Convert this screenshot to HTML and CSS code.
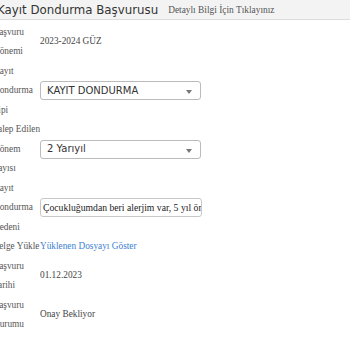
FILE: index.html
```html
<!DOCTYPE html>
<html lang="tr">
<head>
<meta charset="utf-8">
<link rel="stylesheet" href="styles.css">
</head>
<body>
<div class="page">
  <div class="header">
    <span class="title">Kayıt Dondurma Başvurusu</span>
    <a class="info">Detaylı Bilgi İçin Tıklayınız</a>
  </div>
  <div class="form">
    <div class="label">Başvuru Dönemi</div>
    <div class="value">2023-2024 GÜZ</div>

    <div class="label">Kayıt Dondurma Tipi</div>
    <div class="value"><div class="select"><span>KAYIT DONDURMA</span><i class="caret"></i></div></div>

    <div class="label">Talep Edilen Dönem Sayısı</div>
    <div class="value"><div class="select"><span>2 Yarıyıl</span><i class="caret"></i></div></div>

    <div class="label">Kayıt Dondurma Nedeni</div>
    <div class="value"><div class="input">Çocukluğumdan beri alerjim var, 5 yıl önce</div></div>

    <div class="label">Belge Yükle</div>
    <div class="value"><a class="link">Yüklenen Dosyayı Göster</a></div>

    <div class="label">Başvuru Tarihi</div>
    <div class="value">01.12.2023</div>

    <div class="label">Başvuru Durumu</div>
    <div class="value">Onay Bekliyor</div>
  </div>
</div>
</body>
</html>
```
FILE: styles.css
```css
html, body {
  margin: 0;
  padding: 0;
  background: #fff;
}
.page {
  width: 360px;
  margin-left: -8px;
  font-family: "Liberation Serif", "Times New Roman", serif;
  font-size: 9.3px;
  color: #444;
}
.header {
  height: 19px;
  background: #f3f3f3;
  border-bottom: 1px solid #dcdcdc;
  display: flex;
  align-items: center;
  padding-left: 5px;
  margin-bottom: 2.5px;
}
.title {
  font-family: "DejaVu Sans", Verdana, sans-serif;
  font-size: 11.8px;
  color: #333;
  margin-right: 10px;
}
.info {
  color: #555;
  font-size: 9.4px;
}
.form {
  display: grid;
  grid-template-columns: 48px 1fr;
  line-height: 19.5px;
}
.label {
  color: #555;
  margin-left: 1px;
  margin-right: -1px;
}
.value {
  display: flex;
  align-items: center;
  color: #444;
}
.select {
  box-sizing: border-box;
  width: 161px;
  height: 19px;
  border: 1px solid #bbb;
  border-radius: 3px;
  display: flex;
  align-items: center;
  justify-content: space-between;
  padding: 0 8px 0 6px;
  font-family: "DejaVu Sans", Verdana, sans-serif;
  font-size: 10px;
  color: #333;
  line-height: 1;
}
.caret {
  width: 0;
  height: 0;
  border-left: 3.5px solid transparent;
  border-right: 3.5px solid transparent;
  border-top: 4px solid #777;
  margin-top: 3px;
}
.input {
  box-sizing: border-box;
  width: 162px;
  height: 19px;
  border: 1px solid #c8c8c8;
  border-radius: 3px;
  padding: 0 2px;
  white-space: nowrap;
  overflow: hidden;
  line-height: 17px;
  font-size: 9.7px;
  color: #222;
}
.link {
  color: #3d7fd0;
}
```
